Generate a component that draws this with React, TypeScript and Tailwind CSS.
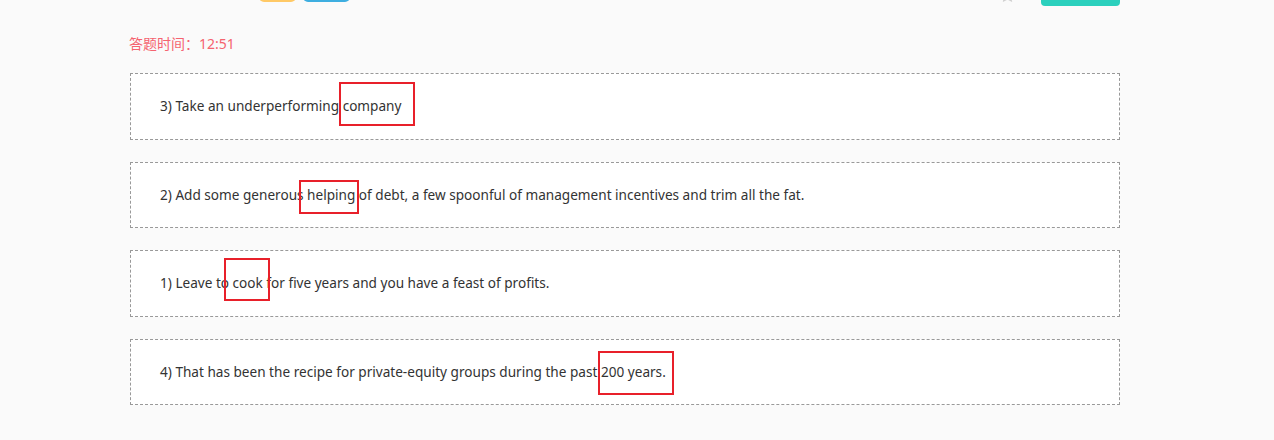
import React from 'react';

type Mark = { left: number; top: number; w: number; h: number };

type Row = { before: string; word: string; after: string; mark: Mark };

const rows: Row[] = [
  { before: '3) Take an underperforming ', word: 'company', after: '', mark: { left: -4, top: -14, w: 76, h: 44 } },
  {
    before: '2) Add some generous ',
    word: 'helping',
    after: ' of debt, a few spoonful of management incentives and trim all the fat.',
    mark: { left: -8, top: -5, w: 60, h: 34 },
  },
  { before: '1) Leave to ', word: 'cook', after: ' for five years and you have a feast of profits.', mark: { left: -9, top: -15, w: 46, h: 43 } },
  {
    before: '4) That has been the recipe for private-equity groups during the past ',
    word: '200 years.',
    after: '',
    mark: { left: -3, top: -11, w: 76, h: 44 },
  },
];

const SentenceCard: React.FC<{ row: Row }> = ({ row }) => (
  <div className="h-[66.5px] flex items-center bg-white border border-dashed border-[#999] pl-[29px]">
    <p className="text-[13.6px] leading-[20px] text-[#333]">
      <span className="whitespace-pre">{row.before}</span>
      <span className="relative inline-block h-[20px]">
        {row.word}
        {/* red answer frame */}
        <span
          className="absolute border-2 border-[#e8202a] pointer-events-none"
          style={{ left: row.mark.left, top: row.mark.top, width: row.mark.w, height: row.mark.h }}
        />
      </span>
      <span className="whitespace-pre">{row.after}</span>
    </p>
  </div>
);

const App: React.FC = () => {
  return (
    <div className="min-h-[440px] bg-[#fafafa]" style={{ fontFamily: '"Noto Sans", "Noto Sans CJK SC", sans-serif' }}>
      <div className="ml-[130px] w-[990px]">
        {/* top toolbar, mostly scrolled out of view */}
        <div className="relative h-[6px] overflow-hidden">
          <div className="flex h-full items-end justify-between">
            <div className="flex items-end gap-[7px] ml-[129px] mb-[4px]">
              <span className="block w-[37px] h-[28px] rounded-[5px] bg-[#ffc966]" />
              <span className="block w-[47px] h-[28px] rounded-[5px] bg-[#3eaee0]" />
            </div>
            <div className="flex items-end gap-[25px]">
              <svg width="17" height="17" viewBox="0 0 24 24" className="mb-[2px]">
                <path
                  d="M12 1l3.3 6.7 7.4 1.1-5.35 5.2 1.27 7.35L12 17.9l-6.62 3.45 1.27-7.35L1.3 8.8l7.4-1.1L12 1z"
                  fill="#d0d0d0"
                />
              </svg>
              <span className="block w-[79px] h-[30px] rounded-[4px] bg-[#2bd0bd]" />
            </div>
          </div>
        </div>

        <div className="pt-[29px] text-[14px] leading-[18px] text-[#f5636f] -ml-[1px]">答题时间：12:51</div>

        <div className="mt-[20px] flex flex-col gap-[22px]">
          {rows.map((r, i) => (
            <SentenceCard key={i} row={r} />
          ))}
        </div>
      </div>
    </div>
  );
};

export default App;
